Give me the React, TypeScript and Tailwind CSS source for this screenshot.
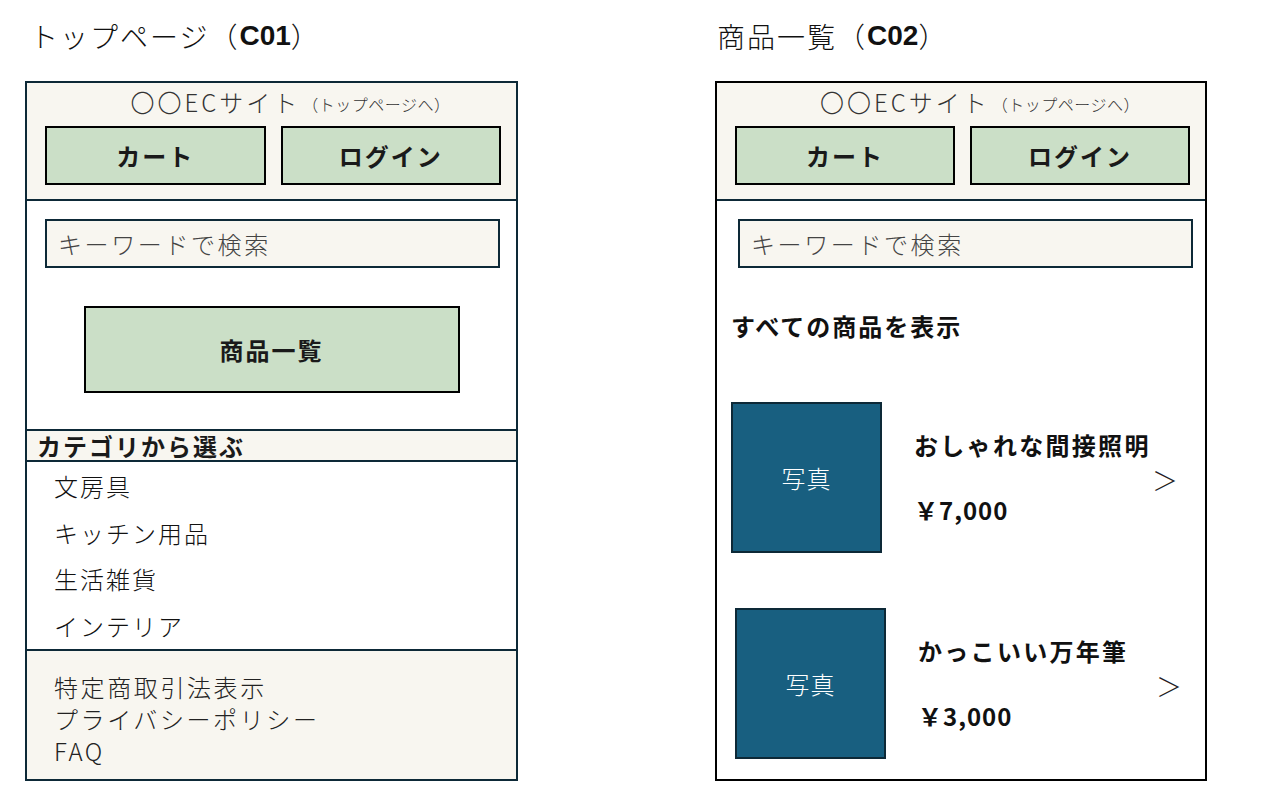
const font = "font-['Noto_Sans_CJK_JP','Noto_Sans_CJK_SC',sans-serif]";

const Header = () => {
  return (
    <div className="h-[118px] bg-[#f8f6f0] border-b-2 border-[#0d2937] flex flex-col">
      <div className="h-[36px] pt-[2px] pl-[38px] flex items-center justify-center">
        <span className="text-[24px] font-light tracking-[3px] text-[#333]">〇〇ECサイト</span>
        <span className="text-[16px] font-light tracking-[0.5px] text-[#333] mt-[4px] ml-[2px]">（トップページへ）</span>
      </div>
      <div className="mt-[7px] flex gap-[15px] pl-[18px] pr-[15px]">
        <button className="flex-1 h-[59px] bg-[#cbdfc7] border-2 border-black text-[24px] font-bold tracking-[2px] text-[#1a1a1a]">
          カート
        </button>
        <button className="flex-1 h-[59px] bg-[#cbdfc7] border-2 border-black text-[24px] font-bold tracking-[2px] text-[#1a1a1a]">
          ログイン
        </button>
      </div>
    </div>
  );
};

const SearchBox = ({ ml }: { ml: string }) => {
  return (
    <div
      className={
        ml +
        " mt-[18px] w-[455px] h-[49px] bg-[#f8f6f0] border-2 border-[#0d2937] flex items-center pl-[11px] text-[24px] font-light tracking-[2.6px] text-[#444]"
      }
    >
      キーワードで検索
    </div>
  );
};

const TopPage = () => {
  const categories = ["文房具", "キッチン用品", "生活雑貨", "インテリア"];
  return (
    <div className="w-[493px] flex flex-col">
      <div className="h-[72px] pl-[5px] flex items-center text-[28px] font-light text-[#111]">
        <span className="tracking-[2px]">トップページ（</span>
        <span className="font-['Liberation_Sans',sans-serif] font-bold">C01</span>
        <span>）</span>
      </div>
      <div className="mt-[9px] h-[700px] border-2 border-[#0d2937] flex flex-col">
        <Header />
        <SearchBox ml="ml-[18px]" />
        <button className="mt-[38px] mx-auto w-[376px] h-[87px] bg-[#cbdfc7] border-2 border-black text-[24px] font-bold tracking-[2px] text-[#1a1a1a]">
          商品一覧
        </button>
        <div className="mt-[36px] h-[33px] bg-[#f8f6f0] border-y-2 border-[#0d2937] flex items-center pl-[10px] text-[24px] font-bold tracking-[2px] text-[#1a1a1a]">
          カテゴリから選ぶ
        </div>
        <div className="pt-[1px] flex flex-col">
          {categories.map((c) => (
            <div
              key={c}
              className="h-[46.5px] flex items-center pl-[27px] text-[24px] font-light tracking-[2px] text-[#111]"
            >
              {c}
            </div>
          ))}
        </div>
        <div className="flex-1 bg-[#f8f6f0] border-t-2 border-[#0d2937] pt-[20px] pl-[27px] flex flex-col text-[24px] font-light tracking-[2.6px] text-[#222] leading-[32px]">
          <span>特定商取引法表示</span>
          <span>プライバシーポリシー</span>
          <span>FAQ</span>
        </div>
      </div>
    </div>
  );
};

const ProductRow = ({ name, price, className }: { name: string; price: string; className: string }) => {
  return (
    <div className={className + " w-[446px] flex"}>
      <div className="w-[151px] h-[151px] shrink-0 bg-[#185f80] border-2 border-[#0d2937] flex items-center justify-center text-white text-[24px] font-light tracking-[1px]">
        写真
      </div>
      <div className="flex-1 ml-[32px] flex flex-col">
        <div className="mt-[27px] h-[32px] flex items-center text-[24px] font-bold tracking-[2.3px] text-[#111]">
          {name}
        </div>
        <div className="mt-[33px] h-[32px] flex items-center text-[24px] font-bold tracking-[1px] text-[#111]">
          {price}
        </div>
      </div>
      <div className="w-[24px] flex items-center justify-center pt-[3px] text-[26px] font-light text-[#222]">＞</div>
    </div>
  );
};

const ProductList = () => {
  return (
    <div className="w-[492px] flex flex-col">
      <div className="h-[72px] pl-[2px] flex items-center text-[28px] font-light text-[#111]">
        <span className="tracking-[2px]">商品一覧（</span>
        <span className="font-['Liberation_Sans',sans-serif] font-bold">C02</span>
        <span>）</span>
      </div>
      <div className="mt-[9px] h-[700px] border-2 border-black flex flex-col">
        <Header />
        <SearchBox ml="ml-[21px]" />
        <div className="mt-[40px] h-[36px] pl-[14px] flex items-center text-[24px] font-bold tracking-[2px] text-[#111]">
          すべての商品を表示
        </div>
        <ProductRow className="mt-[58px] ml-[14px]" name="おしゃれな間接照明" price="￥7,000" />
        <ProductRow className="mt-[55px] ml-[18px]" name="かっこいい万年筆" price="￥3,000" />
      </div>
    </div>
  );
};

export default function App() {
  return (
    <div className={font + " w-[1275px] h-[788px] bg-white flex pl-[25px]"}>
      <TopPage />
      <div className="w-[197px] shrink-0" />
      <ProductList />
    </div>
  );
}
